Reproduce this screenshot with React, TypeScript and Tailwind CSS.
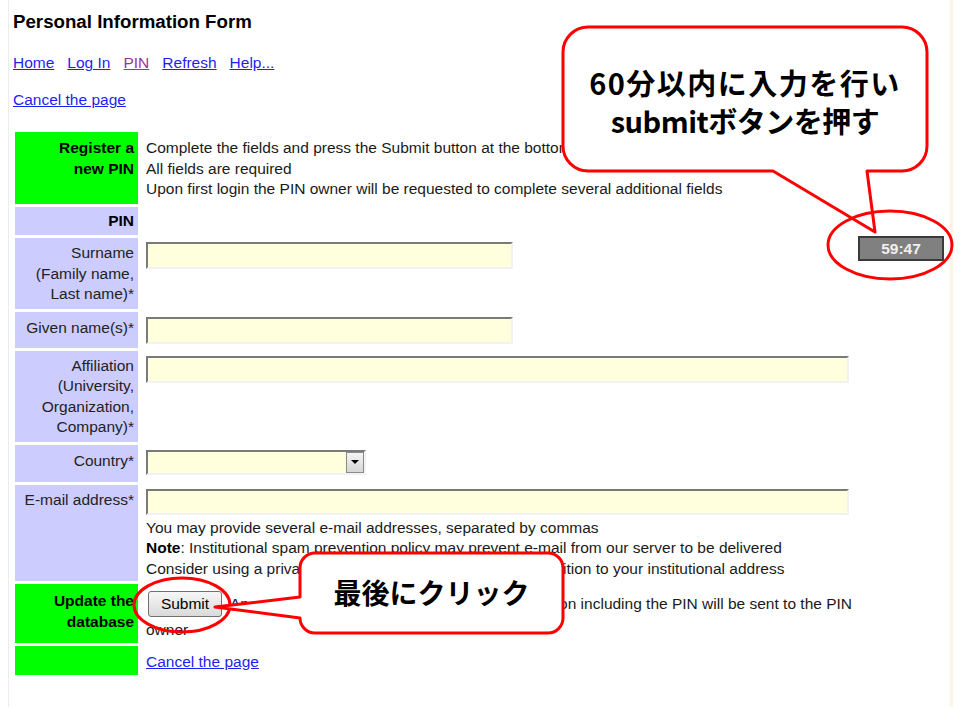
import React from "react";

const inputCls =
  "block bg-[#ffffdd] border-2 border-t-[#7a7a7a] border-l-[#7a7a7a] border-b-[#f2f2f2] border-r-[#f2f2f2] outline-none";

function Label({ children, green, bold, className = "" }: { children: React.ReactNode; green?: boolean; bold?: boolean; className?: string }) {
  return (
    <div
      className={`${green ? "bg-[#00ff00] text-black" : "bg-[#ccccff] text-[#222]"} ${bold ? "font-bold" : ""} text-right pr-[4px] ${className}`}
    >
      {children}
    </div>
  );
}

export default function App() {
  return (
    <div className="relative w-[960px] h-[720px] overflow-hidden bg-white font-['Liberation_Sans',Arial,sans-serif] text-[15.5px] text-[#1a1a1a]">
      <div className="ml-[8px] h-[707px] w-[945px] border-l border-l-[#ececec] border-r-[3px] border-r-[#fcf5e3] pl-[4px] pt-[11px]">
        <h1 className="text-[18.7px] font-bold leading-[22px] text-black">Personal Information Form</h1>
        <nav className="mt-[21px] flex gap-[13px] leading-[18px]">
          <a href="#" className="text-[#1f1fee] underline">Home</a>
          <a href="#" className="text-[#1f1fee] underline">Log In</a>
          <a href="#" className="text-[#993399] underline">PIN</a>
          <a href="#" className="text-[#1f1fee] underline">Refresh</a>
          <a href="#" className="text-[#1f1fee] underline">Help...</a>
        </nav>
        <div className="mt-[19px] leading-[18px]">
          <a href="#" className="text-[#1f1fee] underline">Cancel the page</a>
        </div>

        <div className="ml-[2px] mt-[23px] grid w-[838px] grid-cols-[123px_1fr] gap-x-[8px] gap-y-[3px] leading-[20.5px]">
          {/* Row 1 */}
          <Label green bold className="pt-[6px] pb-[4px]">
            Register a<br />new PIN
          </Label>
          <div className="pt-[6px] pb-[4px] whitespace-nowrap">
            Complete the fields and press the Submit button at the bottom of the page
            <br />
            All fields are required
            <br />
            Upon first login the PIN owner will be requested to complete several additional fields
          </div>

          {/* Row 2 */}
          <Label bold className="py-[4px] text-black">PIN</Label>
          <div />

          {/* Row 3 */}
          <Label className="pt-[5px] pb-[4px]">
            Surname
            <br />
            (Family name,
            <br />
            Last name)*
          </Label>
          <div className="pt-[4px]">
            <input className={`${inputCls} h-[27px] w-[367px]`} readOnly />
          </div>

          {/* Row 4 */}
          <Label className="pt-[6px] pb-[4px]">Given name(s)*</Label>
          <div className="pt-[5px] pb-[4px]">
            <input className={`${inputCls} h-[27px] w-[367px]`} readOnly />
          </div>

          {/* Row 5 */}
          <Label className="pt-[5px] pb-[4px]">
            Affiliation
            <br />
            (University,
            <br />
            Organization,
            <br />
            Company)*
          </Label>
          <div className="pt-[5px]">
            <input className={`${inputCls} h-[27px] w-[703px]`} readOnly />
          </div>

          {/* Row 6 */}
          <Label className="pt-[6px] pb-[4px]">Country*</Label>
          <div className="pt-[5px] pb-[7px]">
            <div className={`${inputCls} flex h-[25px] w-[220px] justify-end`}>
              <div className="flex h-full w-[18px] items-center justify-center border border-[#8a8a8a] bg-linear-to-b from-[#f4f4f4] to-[#d6d6d6]">
                <div className="h-0 w-0 border-l-[4px] border-r-[4px] border-t-[4px] border-l-transparent border-r-transparent border-t-black" />
              </div>
            </div>
          </div>

          {/* Row 7 */}
          <Label className="pt-[5px]">E-mail address*</Label>
          <div className="pt-[4px] pb-[2px]">
            <input className={`${inputCls} h-[26px] w-[703px]`} readOnly />
            <div className="mt-[3px] whitespace-nowrap">
              You may provide several e-mail addresses, separated by commas
              <br />
              <b className="text-black">Note</b>: Institutional spam prevention policy may prevent e-mail from our server to be delivered
              <br />
              Consider using a private e-mail address as a back-up, in addition to your institutional address
            </div>
          </div>

          {/* Row 8 */}
          <Label green bold className="pt-[7px] pb-[4px]">
            Update the
            <br />
            database
          </Label>
          <div className="pt-[7px] pb-[2px]">
            <div className="flex items-center whitespace-nowrap">
              <button className="ml-[2px] h-[26px] w-[74px] rounded-[3px] border border-[#707070] bg-linear-to-b from-[#f7f7f7] to-[#dadada] text-black">
                Submit
              </button>
              <span className="ml-[8px]">An e-mail message with all registration information including the PIN will be sent to the PIN</span>
            </div>
            <div className="mt-[3px]">owner</div>
          </div>

          {/* Row 9 */}
          <Label green className="h-[29px]">{""}</Label>
          <div className="pt-[6px]">
            <a href="#" className="text-[#1f1fee] underline">Cancel the page</a>
          </div>
        </div>
      </div>

      {/* Timer */}
      <div className="absolute left-[858px] top-[236px] flex h-[25px] w-[86px] items-center justify-center border-2 border-[#3a3a3a] bg-[#808080] text-[15.5px] font-bold text-[#f0f0f0]">
        59:47
      </div>

      {/* Annotations */}
      <svg className="pointer-events-none absolute left-0 top-0" width="960" height="720" viewBox="0 0 960 720">
        <path
          d="M 588 27 H 902 A 25 25 0 0 1 927 52 V 146 A 25 25 0 0 1 902 171 H 867 L 875 232 L 773 171 H 588 A 25 25 0 0 1 563 146 V 52 A 25 25 0 0 1 588 27 Z"
          fill="white"
          stroke="#ff0000"
          strokeWidth="3"
          strokeLinejoin="round"
        />
        <ellipse cx="890" cy="245" rx="62" ry="34" fill="none" stroke="#ff0000" strokeWidth="3" />
        <ellipse cx="182" cy="605" rx="48" ry="27" fill="none" stroke="#ff0000" strokeWidth="3" />
        <path
          d="M 315 553 H 548 A 15 15 0 0 1 563 568 V 618 A 15 15 0 0 1 548 633 H 315 A 15 15 0 0 1 300 618 L 215 607 L 300 597 V 568 A 15 15 0 0 1 315 553 Z"
          fill="white"
          stroke="#ff0000"
          strokeWidth="3"
          strokeLinejoin="round"
        />
      </svg>
      <div className="absolute left-[563px] top-[63px] w-[364px] text-center font-['Noto_Sans_CJK_JP',sans-serif] text-[29px] font-bold leading-[38px] text-black">
        <div className="tracking-[1.5px]">60分以内に入力を行い</div>
        <div className="tracking-[-0.5px]">submitボタンを押す</div>
      </div>
      <div className="absolute left-[300px] top-[573px] w-[263px] text-center font-['Noto_Sans_CJK_JP',sans-serif] text-[28px] font-bold leading-[38px] text-black">
        最後にクリック
      </div>
    </div>
  );
}
